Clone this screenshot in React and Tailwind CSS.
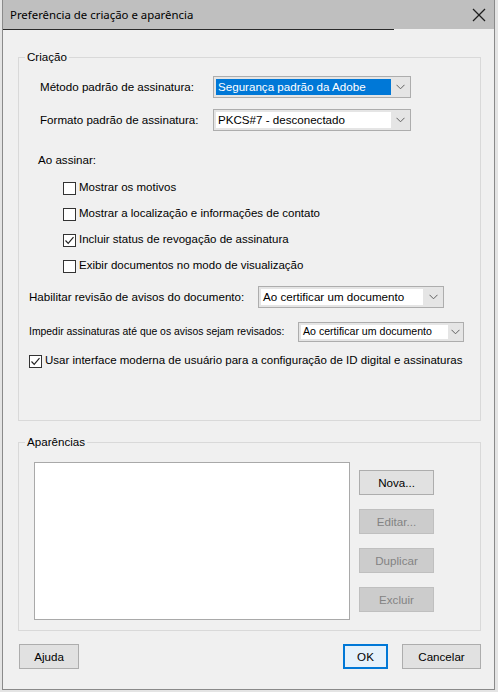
import React from 'react';

const font = { fontFamily: '"Liberation Sans", Arial, sans-serif' };

const Chevron = () => (
    <svg width="9" height="6" viewBox="0 0 9 6" fill="none">
        <polyline points="0.5,0.8 4.5,4.8 8.5,0.8" stroke="#606060" strokeWidth="1" />
    </svg>
);

const Select = ({ value, width, arrow = 19, small = false, selected = false }) => (
    <div className={`flex h-full border border-[#adadad] bg-[#e5e5e5] ${width}`}>
        <div className="flex-1 p-[2px] pr-0 flex">
            <div
                className={`flex-1 flex items-center pl-[2px] whitespace-nowrap ${small ? 'text-[10.6px]' : 'text-[11.6px]'} ${
                    selected ? 'bg-[#0078d7] text-white' : 'bg-white text-black'
                }`}
            >
                {value}
            </div>
        </div>
        <div className="flex items-center justify-center" style={{ width: arrow }}>
            <Chevron />
        </div>
    </div>
);

const Checkbox = ({ checked, label, className = '' }) => (
    <div className={`flex items-center h-[20px] ${className}`}>
        <div className="w-[13px] h-[13px] border border-[#333333] bg-white flex items-center justify-center">
            {checked && (
                <svg width="11" height="11" viewBox="0 0 11 11" fill="none">
                    <polyline points="1.5,5.5 4.2,8.3 9.5,2.2" stroke="#222222" strokeWidth="1.2" />
                </svg>
            )}
        </div>
        <span className="ml-[3px] text-[11.5px] text-black whitespace-nowrap">{label}</span>
    </div>
);

const Button = ({ children, width, disabled = false, primary = false }) => (
    <div
        className={`flex items-center justify-center h-[25px] text-[11.6px] ${width} ${
            disabled
                ? 'bg-[#cccccc] border border-[#bfbfbf] text-[#838383]'
                : primary
                ? 'bg-[#e5f1fb] border-2 border-[#0078d7] text-black'
                : 'bg-[#e1e1e1] border border-[#adadad] text-black'
        }`}
    >
        {children}
    </div>
);

const GroupBox = ({ title, height, children }) => (
    <div className={`relative ml-[15px] w-[463px] border border-[#d9d9d9] ${height}`}>
        <span className="absolute -top-[8px] left-[6px] bg-[#f0f0f0] px-[2px] text-[11.6px] leading-[14px] text-black">
            {title}
        </span>
        {children}
    </div>
);

export default function App() {
    return (
        <div className="w-[498px] h-[692px] bg-[#e4e4e4] overflow-hidden" style={font}>
            <div className="ml-[2px] w-[493px] h-[690px] border-l border-r border-b border-[#8a8a8a] bg-[#f0f0f0] flex flex-col">
                {/* title bar */}
                <div className="h-[29px] bg-[#bfbfbf] flex items-center justify-between pl-[7px] pr-[8px]">
                    <span className="text-[11.4px] text-black" style={{ fontFamily: '"Noto Sans", "Open Sans", sans-serif' }}>
                        Preferência de criação e aparência
                    </span>
                    <svg width="14" height="14" viewBox="0 0 14 14" fill="none">
                        <line x1="1" y1="1" x2="13" y2="13" stroke="#1e1e1e" strokeWidth="1.3" />
                        <line x1="13" y1="1" x2="1" y2="13" stroke="#1e1e1e" strokeWidth="1.3" />
                    </svg>
                </div>
                <div className="h-px w-[391px] bg-[#2a2a2a]" />

                <div className="mt-[27px]">
                    <GroupBox title="Criação" height="h-[364px]">
                        <div className="flex items-center h-[22px] mt-[18px] ml-[21px]">
                            <span className="w-[173px] text-[11.6px]">Método padrão de assinatura:</span>
                            <Select value="Segurança padrão da Adobe" width="w-[198px]" selected />
                        </div>
                        <div className="flex items-center h-[22px] mt-[11px] ml-[21px]">
                            <span className="w-[173px] text-[11.6px]">Formato padrão de assinatura:</span>
                            <Select value="PKCS#7 - desconectado" width="w-[198px]" />
                        </div>
                        <div className="mt-[22px] ml-[19px] text-[11.6px] leading-[14px]">Ao assinar:</div>
                        <div className="mt-[11px] ml-[44px] flex flex-col gap-[6px]">
                            <Checkbox label="Mostrar os motivos" />
                            <Checkbox label="Mostrar a localização e informações de contato" />
                            <Checkbox checked label="Incluir status de revogação de assinatura" />
                            <Checkbox label="Exibir documentos no modo de visualização" />
                        </div>
                        <div className="flex items-center h-[22px] mt-[10px] ml-[10px]">
                            <span className="w-[229px] text-[11.6px] whitespace-nowrap">Habilitar revisão de avisos do documento:</span>
                            <Select value="Ao certificar um documento" width="w-[186px]" arrow={20} />
                        </div>
                        <div className="flex items-center h-[20px] mt-[14px] ml-[10px]">
                            <span className="w-[269px] text-[10.4px] whitespace-nowrap">Impedir assinaturas até que os avisos sejam revisados:</span>
                            <Select value="Ao certificar um documento" width="w-[166px]" arrow={15} small />
                        </div>
                        <Checkbox
                            checked
                            className="mt-[9px] ml-[10px]"
                            label="Usar interface moderna de usuário para a configuração de ID digital e assinaturas"
                        />
                    </GroupBox>
                </div>

                <div className="mt-[21px]">
                    <GroupBox title="Aparências" height="h-[189px]">
                        <div className="flex mt-[19px] ml-[15px]">
                            <div className="w-[316px] h-[158px] bg-white border border-[#a9a9a9]" />
                            <div className="ml-[9px] mt-[8px] flex flex-col gap-[14px]">
                                <Button width="w-[75px]">Nova...</Button>
                                <Button width="w-[75px]" disabled>Editar...</Button>
                                <Button width="w-[75px]" disabled>Duplicar</Button>
                                <Button width="w-[75px]" disabled>Excluir</Button>
                            </div>
                        </div>
                    </GroupBox>
                </div>

                <div className="flex items-center mt-[13px] ml-[16px] mr-[13px]">
                    <Button width="w-[60px]">Ajuda</Button>
                    <div className="flex-1" />
                    <Button width="w-[45px]" primary>OK</Button>
                    <div className="w-[14px]" />
                    <Button width="w-[79px]">Cancelar</Button>
                </div>
            </div>
        </div>
    );
}
